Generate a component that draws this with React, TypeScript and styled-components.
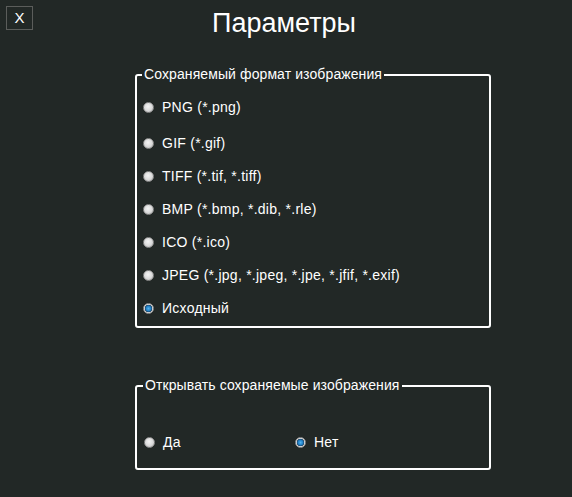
import styled, { createGlobalStyle } from "styled-components";

const GlobalStyle = createGlobalStyle`
  html, body {
    margin: 0;
    padding: 0;
    background: #222826;
  }
  body {
    font-family: "Liberation Sans", Arial, sans-serif;
    color: #ffffff;
  }
`;

const Page = styled.div`
  width: 572px;
  min-height: 497px;
  box-sizing: border-box;
  padding: 6px 6px 0;
`;

const Header = styled.header`
  display: grid;
  grid-template-columns: 1fr auto 1fr;
  align-items: start;
  height: 61px;
`;

const CloseButton = styled.button`
  justify-self: start;
  width: 27px;
  height: 24px;
  box-sizing: border-box;
  background: transparent;
  border: 1px solid #5b5d5b;
  color: #ffffff;
  font-family: "Liberation Sans", Arial, sans-serif;
  font-size: 15px;
  padding: 0;
  line-height: 22px;
`;

const Title = styled.h1`
  margin: 2px 4px 0 0;
  font-family: "Liberation Sans", Arial, sans-serif;
  font-weight: normal;
  font-size: 27px;
  line-height: 30px;
  color: #ffffff;
`;

const Group = styled.fieldset<{ $top: number; $padTop: number; $padBottom: number; $padLeft: number }>`
  margin: ${(p) => p.$top}px 0 0 129px;
  width: 356px;
  box-sizing: border-box;
  border: 2px solid #ffffff;
  border-radius: 3px;
  padding: ${(p) => p.$padTop}px 6px ${(p) => p.$padBottom}px ${(p) => p.$padLeft}px;
  min-width: 0;
`;

const Legend = styled.legend`
  padding: 0 2px;
  margin-left: -1px;
  font-size: 14px;
  line-height: 15px;
  letter-spacing: 0.1px;
  color: #ffffff;
`;

const OptionList = styled.div`
  display: flex;
  flex-direction: column;
  gap: 13px;

  & > label:first-child {
    margin-bottom: 3px;
  }
`;

const OptionRow = styled.div`
  display: grid;
  grid-template-columns: 151px auto;
`;

const Option = styled.label`
  display: flex;
  align-items: center;
  gap: 8px;
  height: 20px;
  font-size: 14px;
  letter-spacing: 0.25px;
  color: #ffffff;
`;

const Radio = styled.input.attrs({ type: "radio" })`
  appearance: none;
  margin: 0;
  width: 11px;
  height: 11px;
  border-radius: 50%;
  box-sizing: border-box;
  border: 1px solid #8d8d8d;
  background: radial-gradient(circle at 45% 40%, #f4f4f4 0%, #d9d9d9 55%, #a9a9a9 100%);
  flex: none;

  &:checked {
    background:
      radial-gradient(circle at 50% 50%, #4fb3f0 0%, #1b79c0 42%, #1a3f5c 55%, #e0e0e0 64%, #b5b5b5 100%);
  }
`;

const formats = [
  "PNG (*.png)",
  "GIF (*.gif)",
  "TIFF (*.tif, *.tiff)",
  "BMP (*.bmp, *.dib, *.rle)",
  "ICO (*.ico)",
  "JPEG (*.jpg, *.jpeg, *.jpe, *.jfif, *.exif)",
  "Исходный",
];

const App = () => {
  return (
    <Page>
      <GlobalStyle />
      <Header>
        <CloseButton>X</CloseButton>
        <Title>Параметры</Title>
      </Header>

      <Group $top={0} $padTop={15} $padBottom={8} $padLeft={6}>
        <Legend>Сохраняемый формат изображения</Legend>
        <OptionList>
          {formats.map((f) => (
            <Option key={f}>
              <Radio name="format" defaultChecked={f === "Исходный"} />
              {f}
            </Option>
          ))}
        </OptionList>
      </Group>

      <Group $top={50} $padTop={39} $padBottom={16} $padLeft={7}>
        <Legend>Открывать сохраняемые изображения</Legend>
        <OptionRow>
          <Option>
            <Radio name="open" />
            Да
          </Option>
          <Option>
            <Radio name="open" defaultChecked />
            Нет
          </Option>
        </OptionRow>
      </Group>
    </Page>
  );
};

export default App;
